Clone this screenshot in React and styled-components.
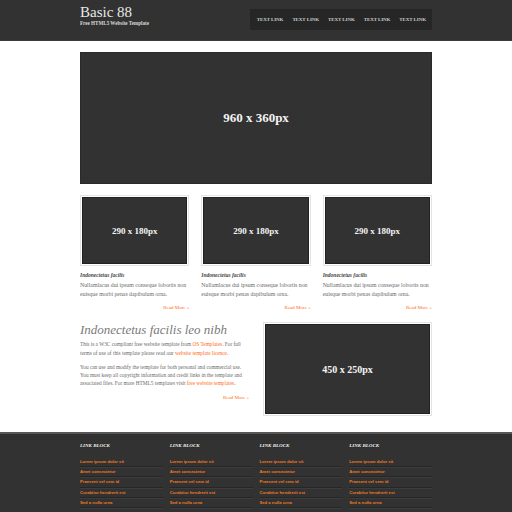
import styled, { createGlobalStyle } from "styled-components";

const GlobalStyle = createGlobalStyle`
    html, body {
        margin: 0;
        padding: 0;
        background: #FFFFFF;
    }
    body {
        font-family: "Liberation Serif", Georgia, serif;
        color: #666666;
    }
`

const Row = styled.div`
    width: 352px;
    margin: 0 auto;
`

const Header = styled.header`
    background: #323232;
    border-bottom: 1px solid #3c3c3c;
    height: 40px;
`
const HeaderInner = styled(Row)`
    display: flex;
    justify-content: space-between;
    align-items: flex-start;
`
const Logo = styled.div`
    padding-top: 4px;
`
const SiteTitle = styled.h1`
    margin: 0;
    font-weight: 400;
    font-size: 15px;
    line-height: 16px;
    color: #e8e8e8;
`
const SiteSlogan = styled.p`
    margin: 0;
    font-weight: 700;
    font-size: 5.1px;
    line-height: 7px;
    color: #d8d8d8;
`
const Nav = styled.nav`
    margin-top: 9px;
    background: #262626;
    height: 21px;
    padding: 0 6px 0 7px;
    display: flex;
    align-items: center;
    gap: 9px;
`
const NavLink = styled.a`
    font-size: 5px;
    font-weight: 700;
    color: #c8c8c8;
    text-transform: uppercase;
    text-decoration: none;
    letter-spacing: -0.1px;
`

const Main = styled(Row)`
    padding: 11px 0 16px;
`
const Placeholder = styled.div`
    background: #323232;
    border: 1px solid ${p => p.$edge || "#222"};
    height: ${p => p.$h}px;
    display: flex;
    align-items: center;
    justify-content: center;
    color: #f4f4f4;
    font-weight: 700;
    font-size: ${p => p.$fs}px;
    box-sizing: border-box;
`
const Frame = styled.div`
    border: 1px solid #e4e4e4;
    padding: 1px;
    background: #fff;
`

const Columns = styled.div`
    display: grid;
    grid-template-columns: repeat(3, 1fr);
    gap: 12px;
    margin-top: 11px;
`
const Column = styled.div``
const ColTitle = styled.h2`
    margin: 5px 0 0;
    font-size: 5.5px;
    line-height: 8px;
    font-style: italic;
    font-weight: 700;
    color: #444;
`
const Text = styled.p`
    margin: ${p => p.$m || "2px 0 0"};
    font-size: ${p => p.$fs || 5.8}px;
    line-height: ${p => p.$lh || 8.5}px;
    color: #6a6a6a;
`
const Orange = styled.a`
    color: #ff6a10;
    text-decoration: none;
`
const ReadMore = styled.a`
    display: block;
    text-align: right;
    font-size: 5px;
    line-height: 8px;
    color: #ff6a10;
    text-decoration: none;
    margin-top: ${p => p.$mt || 5}px;
`

const Split = styled.div`
    display: grid;
    grid-template-columns: 169px 169px;
    gap: 14px;
    margin-top: 10px;
`
const BigTitle = styled.h2`
    margin: 0;
    font-size: 13px;
    line-height: 16px;
    font-style: italic;
    font-weight: 400;
    color: #7a7a7a;
`

const Footer = styled.footer`
    background: #323232;
    border-top: 2px solid #575757;
    padding: 9px 0 6px;
`
const FooterGrid = styled(Row)`
    display: grid;
    grid-template-columns: repeat(4, 1fr);
    gap: 7px;
`
const BlockTitle = styled.h3`
    margin: 0 0 9px 0;
    font-family: "Liberation Serif", serif;
    font-size: 5px;
    line-height: 6px;
    font-style: italic;
    font-weight: 700;
    color: #ffffff;
    text-transform: uppercase;
    text-shadow: 0 0 1px #000;
`
const LinkList = styled.ul`
    list-style: none;
    margin: 0;
    padding: 0;
`
const LinkItem = styled.li`
    border-bottom: 1px solid #262626;
    box-shadow: 0 1px 0 #3d3d3d;
    padding: 2px 0 2px;
    margin-bottom: 1px;
    font-family: "Liberation Sans", Arial, sans-serif;
    font-size: 4.2px;
    line-height: 4.2px;
    font-weight: 700;
    color: #f07a22;
`

const links = ["Lorem ipsum dolor sit", "Amet consectetur", "Praesent vel sem id", "Curabitur hendrerit est", "Sed a nulla urna"]

export default function App() {
    return (
        <>
            <GlobalStyle />
            <Header>
                <HeaderInner>
                    <Logo>
                        <SiteTitle>Basic 88</SiteTitle>
                        <SiteSlogan>Free HTML5 Website Template</SiteSlogan>
                    </Logo>
                    <Nav>
                        {[1, 2, 3, 4, 5].map(i => <NavLink key={i}>Text Link</NavLink>)}
                    </Nav>
                </HeaderInner>
            </Header>

            <Main>
                <Placeholder $h={132} $fs={13} $edge="#2a2a2a">960 x 360px</Placeholder>

                <Columns>
                    {[1, 2, 3].map(i => (
                        <Column key={i}>
                            <Frame>
                                <Placeholder $h={67} $fs={9}>290 x 180px</Placeholder>
                            </Frame>
                            <ColTitle>Indonectetus facilis</ColTitle>
                            <Text>Nullamlacus dui ipsum conseque lobortis non euisque morbi penas dapibulum orna.</Text>
                            <ReadMore $mt={6}>Read More &raquo;</ReadMore>
                        </Column>
                    ))}
                </Columns>

                <Split>
                    <div>
                        <BigTitle>Indonectetus facilis leo nibh</BigTitle>
                        <Text $m="2px 0 0" $fs={5.3} $lh={8.5}>This is a W3C compliant free website template from <Orange>OS Templates</Orange>. For full terms of use of this template please read our <Orange>website template licence</Orange>.</Text>
                        <Text $m="6px 0 0" $fs={5.3} $lh={8}>You can use and modify the template for both personal and commercial use. You must keep all copyright information and credit links in the template and associated files. For more HTML5 templates visit <Orange>free website templates</Orange>.</Text>
                        <ReadMore $mt={7}>Read More &raquo;</ReadMore>
                    </div>
                    <Frame>
                        <Placeholder $h={90} $fs={10}>450 x 250px</Placeholder>
                    </Frame>
                </Split>
            </Main>

            <Footer>
                <FooterGrid>
                    {[1, 2, 3, 4].map(i => (
                        <div key={i}>
                            <BlockTitle>Link Block</BlockTitle>
                            <LinkList>
                                {links.map(l => <LinkItem key={l}>{l}</LinkItem>)}
                            </LinkList>
                        </div>
                    ))}
                </FooterGrid>
            </Footer>
        </>
    )
}
